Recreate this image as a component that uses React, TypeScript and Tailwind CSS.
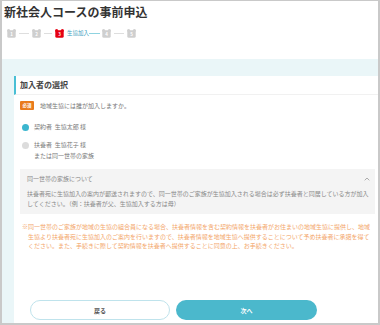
const font = { fontFamily: '"Noto Sans CJK JP", "Noto Sans", sans-serif' };

function StepIcon({ n, active }: { n: number; active?: boolean }) {
  const fill = active ? "#e60012" : "#cfcfcf";
  return (
    <div className="relative w-[9px] h-[9px] shrink-0">
      <svg width="9" height="9" viewBox="0 0 9 9" className="absolute inset-0">
        <circle cx="1.6" cy="1.6" r="1.6" fill={fill} />
        <circle cx="7.4" cy="1.6" r="1.6" fill={fill} />
        <rect x="0.3" y="1.2" width="8.4" height="7.6" rx="1.6" fill={fill} />
      </svg>
      <span className="absolute inset-0 flex items-center justify-center pt-[1px] text-[4.5px] font-bold leading-none text-white">
        {n}
      </span>
    </div>
  );
}

function Line({ w, cyan }: { w: number; cyan?: boolean }) {
  return (
    <div
      className={cyan ? "h-px bg-[#8fd3e0] shrink-0" : "h-px bg-[#dedede] shrink-0"}
      style={{ width: w }}
    />
  );
}

export default function App() {
  return (
    <div
      style={font}
      className="w-[380px] h-[325px] overflow-hidden bg-white border-[#c9c9c9] border-l-2 border-r-2 border-t border-b-2 flex flex-col"
    >
      <header className="h-[58px] shrink-0 pl-[2px] pt-[3px]">
        <h1 className="text-[12px] leading-[15px] font-bold text-[#333]">新社会人コースの事前申込</h1>
        <div className="mt-[10px] ml-[3px] flex items-center">
          <StepIcon n={1} />
          <div className="mx-[3px]"><Line w={10} /></div>
          <StepIcon n={2} />
          <div className="mx-[3px]"><Line w={8} /></div>
          <StepIcon n={3} active />
          <span className="ml-[3px] text-[5.5px] leading-none text-[#3f9fc0]">生協加入</span>
          <Line w={11} cyan />
          <div className="ml-[2px]"><StepIcon n={4} /></div>
          <div className="mx-[3px]"><Line w={10} /></div>
          <StepIcon n={5} />
        </div>
      </header>

      <div className="flex-1 bg-[#eaf6f8] pt-[17px] pl-[12px] flex flex-col min-h-0">
        <div className="flex-1 bg-white flex flex-col">
          <div className="h-[19px] shrink-0 border-l-2 border-[#49bfd5] border-b border-b-[#f1f1f1] pl-[4px] flex items-center">
            <h2 className="text-[8px] font-bold text-[#444] leading-none">加入者の選択</h2>
          </div>

          <div className="pl-[6px] pr-[3px] flex flex-col">
            <div className="mt-[6px] flex items-center h-[9px]">
              <span className="w-[14px] h-[9px] rounded-[1px] bg-[#e97b1c] text-white text-[4.5px] font-bold flex items-center justify-center leading-none">必須</span>
              <span className="ml-[6px] text-[6px] text-[#777] leading-none">地域生協には誰が加入しますか。</span>
            </div>

            <div className="mt-[12px] flex items-center h-[10px]">
              <span className="ml-[2px] w-[7px] h-[7px] rounded-full bg-[#3cb6cf]" />
              <span className="ml-[5px] text-[6px] text-[#777] leading-none">契約者&nbsp;&nbsp;生協太郎 様</span>
            </div>

            <div className="mt-[8px] flex items-start">
              <span className="ml-[2px] mt-[1.5px] w-[7px] h-[7px] rounded-full bg-[#dcdcdc] shrink-0" />
              <div className="ml-[5px] text-[6px] leading-[11px] text-[#777] -mt-px">
                <p>扶養者&nbsp;&nbsp;生協花子 様</p>
                <p>または同一世帯の家族</p>
              </div>
            </div>

            <div className="mt-[8px] bg-[#f4f4f4] pl-[7px] pr-[4px] pt-[5px] pb-[5px]">
              <div className="flex items-center justify-between h-[9px]">
                <span className="text-[6px] leading-none text-[#888]">同一世帯の家族について</span>
                <svg width="6" height="4" viewBox="0 0 6 4" className="mr-[1px]">
                  <path d="M0.7 3.3 L3 1 L5.3 3.3" fill="none" stroke="#999" strokeWidth="0.8" />
                </svg>
              </div>
              <p className="mt-[6px] text-[6px] leading-[10px] text-[#888]">
                扶養者宛に生協加入の案内が郵送されますので、同一世帯のご家族が生協加入される場合は必ず扶養者と同居している方が加入してください。（例：扶養者が父、生協加入する方は母）
              </p>
            </div>

            <p className="mt-[8px] pl-[8px] -indent-[6px] pr-[2px] text-[6px] leading-[9.7px] text-[#f3a66a]">
              ※同一世帯のご家族が地域の生協の組合員になる場合、扶養者情報を含む契約情報を扶養者がお住まいの地域生協に提供し、地域生協より扶養者宛に生協加入のご案内を行いますので、扶養者情報を地域生協へ提供することについて予め扶養者に承諾を得てください。また、手続きに際して契約情報を扶養者へ提供することに同意の上、お手続きください。
            </p>
          </div>

          <div className="mt-auto mb-[3px] ml-[16px] flex gap-[6px]">
            <button className="w-[140px] h-[20px] rounded-full border border-[#bfe3ec] bg-white text-[6px] font-bold text-[#555]">戻る</button>
            <button className="w-[141px] h-[20px] rounded-full bg-[#4bb8cc] text-[6px] font-bold text-white">次へ</button>
          </div>
        </div>
      </div>
    </div>
  );
}
